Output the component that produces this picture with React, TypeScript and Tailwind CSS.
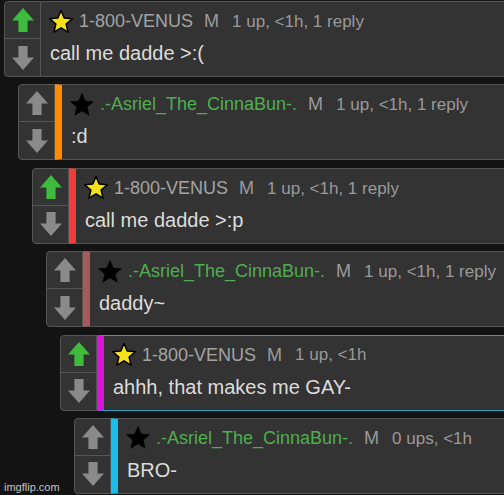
import React from "react";

type Comment = {
  user: string;
  venus: boolean;
  meta: string;
  text: string;
  bar?: string;
  active?: boolean;
};

const comments: Comment[] = [
  { user: "1-800-VENUS", venus: true, meta: "1 up, <1h, 1 reply", text: "call me dadde >:(" },
  { user: ".-Asriel_The_CinnaBun-.", venus: false, meta: "1 up, <1h, 1 reply", text: ":d", bar: "border-l-[#ff8c00]" },
  { user: "1-800-VENUS", venus: true, meta: "1 up, <1h, 1 reply", text: "call me dadde >:p", bar: "border-l-[#f03c3c]" },
  { user: ".-Asriel_The_CinnaBun-.", venus: false, meta: "1 up, <1h, 1 reply", text: "daddy~", bar: "border-l-[#a55a5a]" },
  { user: "1-800-VENUS", venus: true, meta: "1 up, <1h", text: "ahhh, that makes me GAY-", bar: "border-l-[#dd11dd]", active: true },
  { user: ".-Asriel_The_CinnaBun-.", venus: false, meta: "0 ups, <1h", text: "BRO-", bar: "border-l-[#19bde8]" },
];

const indents = ["ml-[4px]", "ml-[18px]", "ml-[32px]", "ml-[46px]", "ml-[60px]", "ml-[74px]"];

const Arrow = ({ down, color }: { down?: boolean; color: string }) => (
  <svg width="22" height="24" viewBox="0 0 22 24" className={down ? "rotate-180" : ""}>
    <polygon points="11,0 22,12.4 15.6,12.4 15.6,24 6.4,24 6.4,12.4 0,12.4" fill={color} />
  </svg>
);

const Star = ({ yellow }: { yellow: boolean }) => (
  <svg width="24" height="24" viewBox="1 1 22 22" className="-ml-[1px]">
    <polygon
      points="12,1.5 14.9,8.4 22.4,9 16.7,13.9 18.5,21.3 12,17.3 5.5,21.3 7.3,13.9 1.6,9 9.1,8.4"
      fill={yellow ? "#f5e21c" : "#000"}
      stroke="#000"
      strokeWidth={yellow ? 1.4 : 0.6}
      strokeLinejoin="round"
    />
  </svg>
);

const Row = ({ c, i }: { c: Comment; i: number }) => (
  <div className={`flex h-[76px] w-[620px] shrink-0 ${indents[i]}`}>
    <div className="flex w-[37px] shrink-0 flex-col rounded-l-[4px] border border-[#555] bg-[#333]">
      <div className="flex h-[37px] items-center justify-center border-b border-[#555]">
        <Arrow color={c.venus ? "#3dbb3d" : "#8a8a8a"} />
      </div>
      <div className="flex flex-1 items-center justify-center">
        <Arrow down color="#8a8a8a" />
      </div>
    </div>
    <div
      className={`flex flex-1 flex-col bg-[#333] pl-[9px] ${
        c.active ? "border border-[#2a9ec4]" : "border border-l-0 border-[#555]"
      } ${c.bar ? `border-l-[7px] ${c.bar}` : ""}`}
    >
      <div className="flex h-[39px] items-center">
        <Star yellow={c.venus} />
        <span className={`ml-[6px] text-[18px] ${c.venus ? "text-[#a3a3a3]" : "text-[#4fae4f]"}`}>{c.user}</span>
        <span className="ml-[11px] text-[18px] text-[#9a9a9a]">M</span>
        <span className="ml-[13px] text-[17px] text-[#9a9a9a]">{c.meta}</span>
      </div>
      <div className="text-[20px] leading-[24px] text-[#dcdcdc]">{c.text}</div>
    </div>
  </div>
);

export default function App() {
  return (
    <div className="relative h-[495px] w-[504px] overflow-hidden bg-[#131313] pt-[1px] font-['Liberation_Sans',Arial,sans-serif]">
      <div className="flex flex-col gap-[7.4px]">
        {comments.map((c, i) => (
          <Row key={i} c={c} i={i} />
        ))}
      </div>
      <span className="absolute left-[4px] top-[479px] text-[11px] text-[#c4c4c4]">imgflip.com</span>
    </div>
  );
}
